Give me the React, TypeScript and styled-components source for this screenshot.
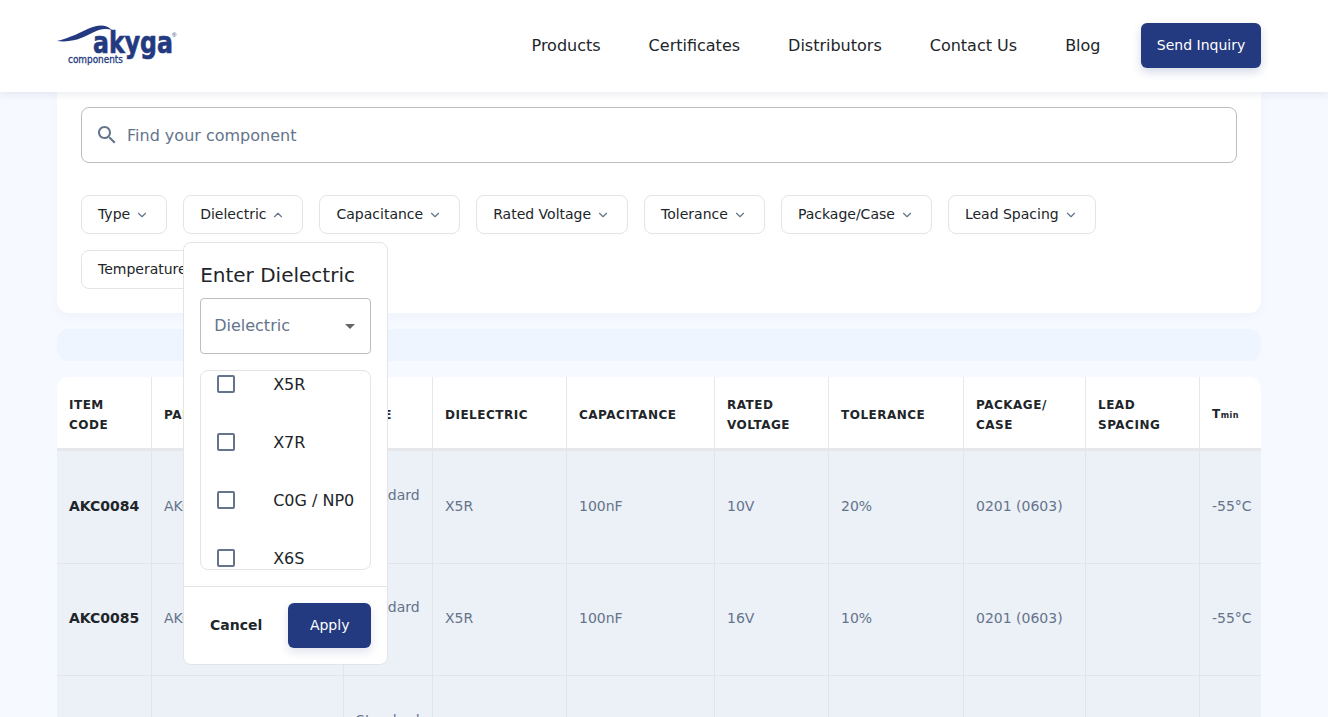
import styled, { createGlobalStyle } from "styled-components";
import { ChevronDown, ChevronUp } from "lucide-react";

const GlobalStyle = createGlobalStyle`
  html, body {
    margin: 0;
    height: 100%;
    overflow: hidden;
    background-color: #f6f9ff;
    font-family: "DejaVu Sans", sans-serif;
    color: #212529;
  }
  * {
    box-sizing: border-box;
  }
`;

const Header = styled.header`
  position: relative;
  z-index: 10;
  height: 92px;
  padding: 0 67px 2px 57px;
  display: flex;
  align-items: center;
  justify-content: space-between;
  background-color: #fff;
  box-shadow: 0 2px 8px rgba(30, 50, 90, 0.1);
`;

const Nav = styled.nav`
  display: flex;
  align-items: center;
  gap: 48px;
`;

const NavLink = styled.a`
  font-size: 16px;
  color: #212529;
`;

const InquiryButton = styled.button`
  width: 120px;
  height: 45px;
  margin-left: -7.5px;
  border: none;
  border-radius: 6px;
  background-color: #233a80;
  color: #fff;
  font: 14px "DejaVu Sans", sans-serif;
  box-shadow: 0 4px 10px rgba(35, 58, 128, 0.2);
`;

const Main = styled.main`
  padding: 0 67px 0 57px;
`;

const FilterCard = styled.section`
  padding: 15px 24px 24px;
  background-color: #fff;
  border-radius: 0 0 12px 12px;
  box-shadow: 0 4px 12px rgba(30, 50, 90, 0.03);
`;

const SearchBox = styled.div`
  height: 56px;
  padding: 0 13px;
  display: flex;
  align-items: center;
  gap: 8px;
  margin: 0;
  border: 1px solid #bdbdbd;
  border-radius: 8px;
  color: #64748b;
`;

const SearchInput = styled.input`
  flex: 1;
  padding: 0;
  border: none;
  outline: none;
  font: 16px "DejaVu Sans", sans-serif;
  color: #212529;
  &::placeholder {
    color: #64748b;
    opacity: 1;
  }
`;

const ChipRow = styled.div`
  margin-top: 32px;
  display: flex;
  flex-wrap: wrap;
  gap: 16px;
`;

const ChipSlot = styled.div`
  position: relative;
`;

const Chip = styled.button`
  height: 39px;
  padding: 0 17px 2px 16px;
  display: flex;
  align-items: center;
  gap: 5px;
  border: 1px solid #e2e4e8;
  border-radius: 8px;
  background-color: #fff;
  color: #212529;
  font: 14px "DejaVu Sans", sans-serif;
  white-space: nowrap;
  svg {
    color: #64748b;
    margin-top: 2px;
  }
`;

const Popover = styled.div`
  position: absolute;
  z-index: 5;
  top: 47px;
  left: 0;
  width: 205px;
  height: 423px;
  display: flex;
  flex-direction: column;
  background-color: #fff;
  border: 1px solid #e2e4e8;
  border-radius: 8px;
`;

const PopoverBody = styled.div`
  padding: 16px 16px 16px;
  border-bottom: 1px solid #e2e4e8;
`;

const PopoverTitle = styled.div`
  font-size: 20px;
  line-height: 32px;
  margin-bottom: 7px;
`;

const SelectBox = styled.div`
  height: 56px;
  padding: 0 8px 0 13px;
  display: flex;
  align-items: center;
  justify-content: space-between;
  border: 1px solid #bdbdbd;
  border-radius: 4px;
  font-size: 16px;
  color: #64748b;
`;

const SelectLabel = styled.span`
  margin-bottom: 2px;
`;

const OptionList = styled.div`
  margin-top: 16px;
  height: 200px;
  padding: 4px 16px 0;
  display: flex;
  flex-direction: column;
  gap: 40px;
  overflow: hidden;
  border: 1px solid #e2e4e8;
  border-radius: 8px;
`;

const Option = styled.label`
  flex: none;
  height: 18px;
  display: flex;
  align-items: center;
  gap: 38px;
  font-size: 16px;
  white-space: nowrap;
`;

const CheckBox = styled.span`
  flex: none;
  width: 18px;
  height: 18px;
  border: 2px solid #64748b;
  border-radius: 2px;
`;

const PopoverFooter = styled.div`
  flex: 1;
  padding: 0 16px;
  display: flex;
  align-items: center;
  gap: 16px;
`;

const CancelButton = styled.button`
  width: 72px;
  height: 45px;
  padding: 0 0 2px;
  border: none;
  background: none;
  color: #212529;
  font: bold 14px "DejaVu Sans", sans-serif;
`;

const ApplyButton = styled.button`
  width: 83px;
  height: 45px;
  padding: 0 0 2px;
  border: none;
  border-radius: 6px;
  background-color: #233a80;
  color: #fff;
  font: 14px "DejaVu Sans", sans-serif;
  box-shadow: 0 4px 10px rgba(35, 58, 128, 0.15);
`;

const Band = styled.div`
  height: 32px;
  margin-top: 16px;
  border-radius: 12px;
  background-color: #eef5ff;
`;

const TableWrap = styled.div`
  margin-top: 16px;
  overflow: hidden;
  border-radius: 12px 12px 0 0;
`;

const Table = styled.table`
  width: 1290px;
  table-layout: fixed;
  border-collapse: separate;
  border-spacing: 0;
`;

const HeadCell = styled.th`
  height: 74px;
  padding: 5px 12px 0;
  background-color: #fff;
  border-right: 1px solid #e5e7eb;
  border-bottom: 3px solid #e5e7eb;
  font-size: 12px;
  line-height: 20px;
  font-weight: bold;
  letter-spacing: 0.5px;
  text-align: left;
  color: #212529;
`;

const Sub = styled.span`
  font-size: 8px;
`;

const Cell = styled.td<{ $strong?: boolean }>`
  height: 112.5px;
  padding: 0 12px 2px;
  background-color: #ecf0f7;
  border-right: 1px solid #e2e4e8;
  border-bottom: 1px solid #e2e4e8;
  font-size: 14px;
  line-height: 22px;
  font-weight: ${(p) => (p.$strong ? "bold" : "normal")};
  color: ${(p) => (p.$strong ? "#212529" : "#64748b")};
`;

const columns = [95, 192, 89, 134, 148, 114, 135, 122, 114, 147];

const filters = [
  "Type",
  "Dielectric",
  "Capacitance",
  "Rated Voltage",
  "Tolerance",
  "Package/Case",
  "Lead Spacing",
  "Temperature Range",
];

const rows = [
  ["AKC0084", "AKC0201X5R104M10", "Standard SMD", "X5R", "100nF", "10V", "20%", "0201 (0603)", "", "-55°C"],
  ["AKC0085", "AKC0201X5R104K16", "Standard SMD", "X5R", "100nF", "16V", "10%", "0201 (0603)", "", "-55°C"],
  ["AKC0086", "AKC0201X5R104K25", "Standard SMD", "X5R", "100nF", "25V", "10%", "0201 (0603)", "", "-55°C"],
];

const Logo = () => (
  <svg width="122" height="44" viewBox="0 0 122 44">
    <path d="M0 18C13 15 24 9 33 5C41 1.5 49 1 55 7C48 4.5 41 6.5 33 11C23 16.5 12 19.5 0 18Z" fill="#233a80" />
    <text x="36" y="30" fontFamily="DejaVu Sans" fontWeight="bold" fontSize="31" fill="#233a80" stroke="#233a80" strokeWidth="0.7" textLength="80" lengthAdjust="spacingAndGlyphs">
      akyga
    </text>
    <text x="11" y="40" fontFamily="DejaVu Sans" fontSize="10.5" fill="#233a80" stroke="#233a80" strokeWidth="0.3" textLength="55" lengthAdjust="spacingAndGlyphs">
      components
    </text>
    <text x="115" y="14" fontFamily="Liberation Sans" fontSize="6" fill="#233a80">
      ®
    </text>
  </svg>
);

const SearchIcon = () => (
  <svg width="24" height="24" viewBox="0 0 24 24" fill="currentColor">
    <path d="M15.5 14h-.79l-.28-.27C15.41 12.59 16 11.11 16 9.5 16 5.91 13.09 3 9.5 3S3 5.91 3 9.5 5.91 16 9.5 16c1.61 0 3.09-.59 4.23-1.57l.27.28v.79l5 4.99L20.49 19l-4.99-5zm-6 0C7.01 14 5 11.99 5 9.5S7.01 5 9.5 5 14 7.01 14 9.5 11.99 14 9.5 14z" />
  </svg>
);

const DropIcon = () => (
  <svg width="24" height="24" viewBox="0 0 24 24" fill="#666">
    <path d="M7 10l5 5 5-5z" />
  </svg>
);

const App = () => {
  return (
    <>
      <GlobalStyle />
      <Header>
        <Logo />
        <Nav>
          <NavLink>Products</NavLink>
          <NavLink>Certificates</NavLink>
          <NavLink>Distributors</NavLink>
          <NavLink>Contact Us</NavLink>
          <NavLink>Blog</NavLink>
          <InquiryButton>Send Inquiry</InquiryButton>
        </Nav>
      </Header>
      <Main>
        <FilterCard>
          <SearchBox>
            <SearchIcon />
            <SearchInput placeholder="Find your component" />
          </SearchBox>
          <ChipRow>
            {filters.map((name) => (
              <ChipSlot key={name}>
                <Chip>
                  {name}
                  {name === "Dielectric" ? <ChevronUp size={14} /> : <ChevronDown size={14} />}
                </Chip>
                {name === "Dielectric" && (
                  <Popover>
                    <PopoverBody>
                      <PopoverTitle>Enter Dielectric</PopoverTitle>
                      <SelectBox>
                        <SelectLabel>Dielectric</SelectLabel>
                        <DropIcon />
                      </SelectBox>
                      <OptionList>
                        {["X5R", "X7R", "C0G / NP0", "X6S", "Y5V"].map((opt) => (
                          <Option key={opt}>
                            <CheckBox />
                            {opt}
                          </Option>
                        ))}
                      </OptionList>
                    </PopoverBody>
                    <PopoverFooter>
                      <CancelButton>Cancel</CancelButton>
                      <ApplyButton>Apply</ApplyButton>
                    </PopoverFooter>
                  </Popover>
                )}
              </ChipSlot>
            ))}
          </ChipRow>
        </FilterCard>
        <Band />
        <TableWrap>
          <Table>
            <colgroup>
              {columns.map((w, i) => (
                <col key={i} width={w} />
              ))}
            </colgroup>
            <thead>
              <tr>
                <HeadCell>ITEM CODE</HeadCell>
                <HeadCell>PART NUMBER</HeadCell>
                <HeadCell>TYPE</HeadCell>
                <HeadCell>DIELECTRIC</HeadCell>
                <HeadCell>CAPACITANCE</HeadCell>
                <HeadCell>RATED VOLTAGE</HeadCell>
                <HeadCell>TOLERANCE</HeadCell>
                <HeadCell>PACKAGE/ CASE</HeadCell>
                <HeadCell>LEAD SPACING</HeadCell>
                <HeadCell>
                  T<Sub>min</Sub>
                </HeadCell>
              </tr>
            </thead>
            <tbody>
              {rows.map((row) => (
                <tr key={row[0]}>
                  {row.map((value, i) => (
                    <Cell key={i} $strong={i === 0}>
                      {value}
                    </Cell>
                  ))}
                </tr>
              ))}
            </tbody>
          </Table>
        </TableWrap>
      </Main>
    </>
  );
};

export default App;
